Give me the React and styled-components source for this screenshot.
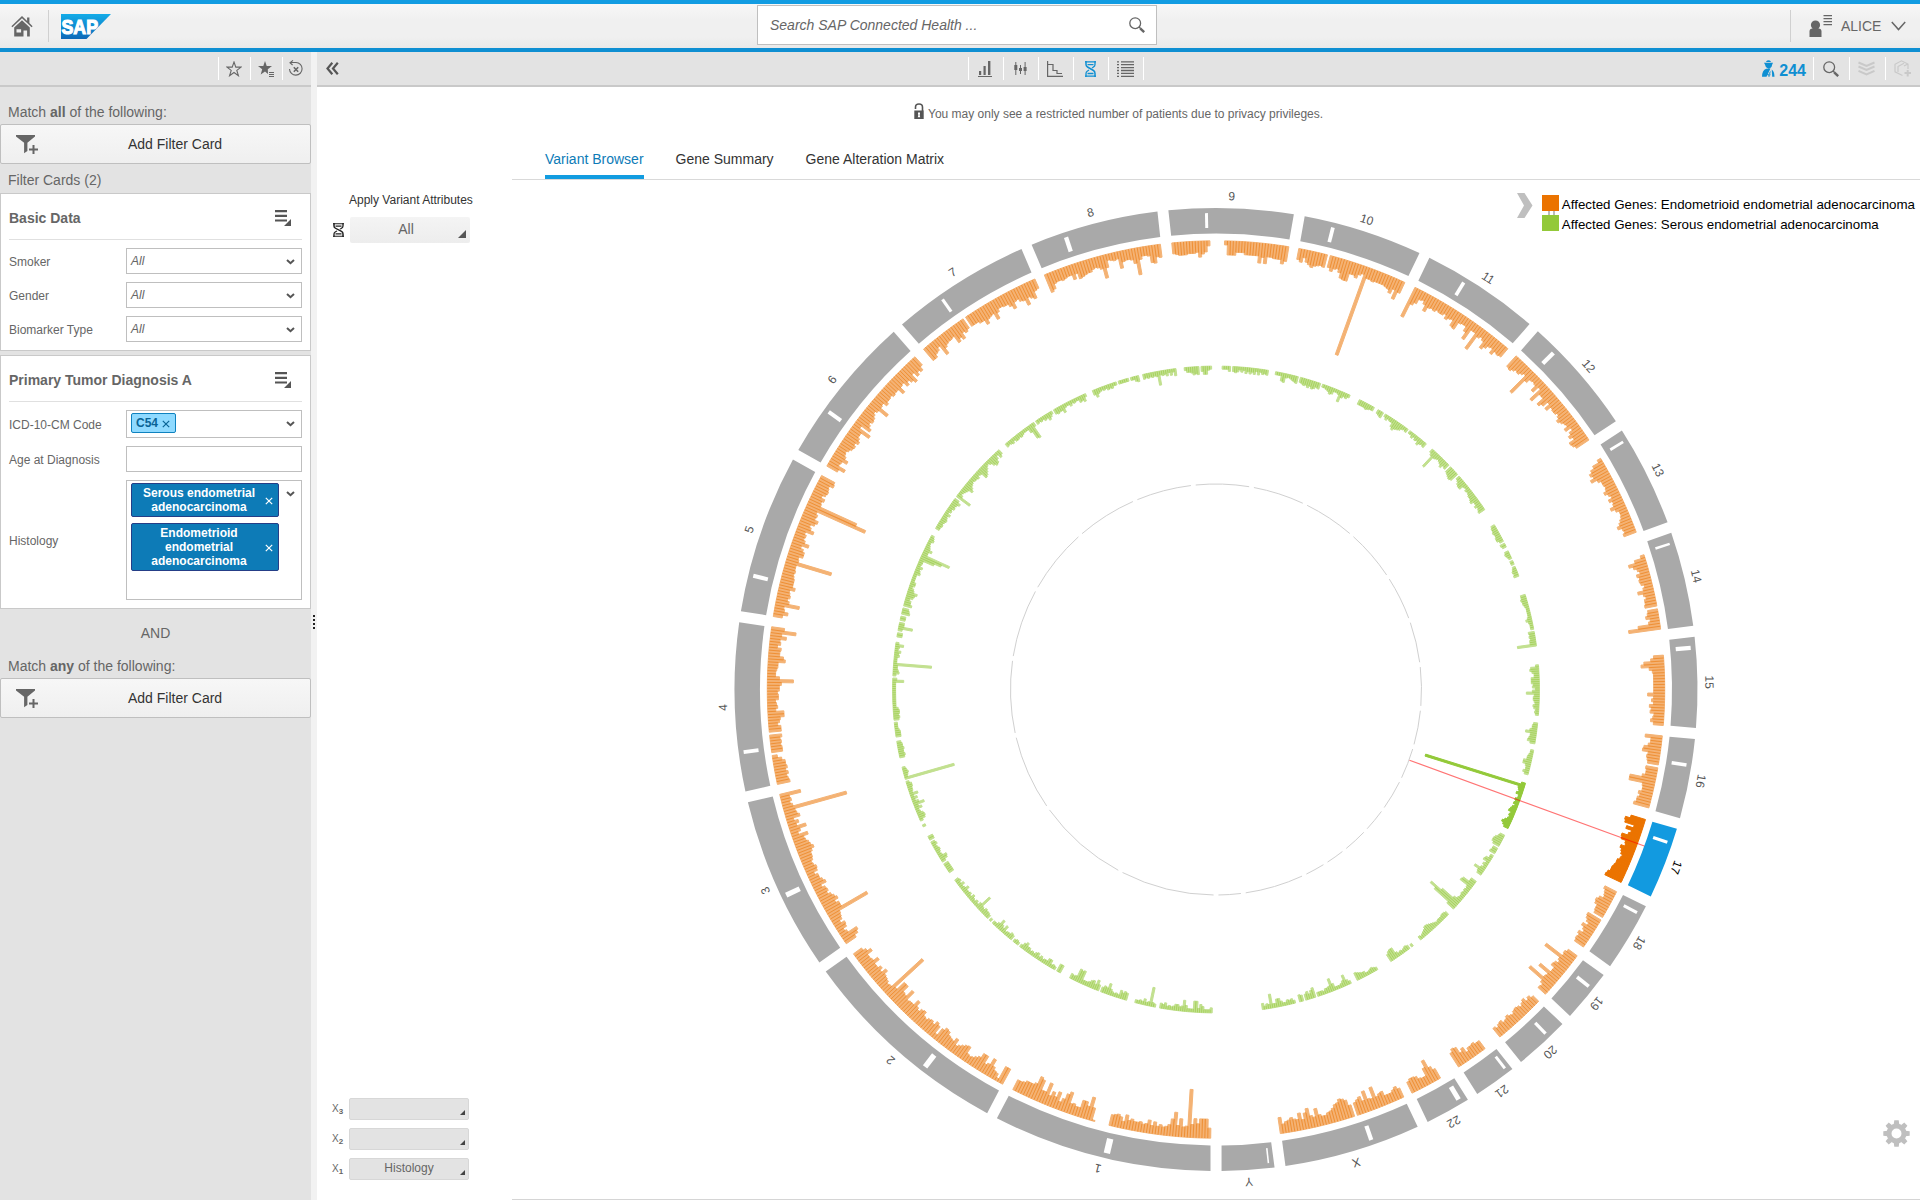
import React from "react";
import styled, { createGlobalStyle, css } from "styled-components";

const Global = createGlobalStyle`
  * { box-sizing: border-box; }
  html, body { margin: 0; padding: 0; }
  body { font-family: "Liberation Sans", Arial, sans-serif; font-size: 14px; color: #666; background: #fff; overflow: hidden; }
  svg { display: block; }
`;

const Page = styled.div`
  display: flex;
  flex-direction: column;
  width: 1920px;
  height: 1200px;
  overflow: hidden;
`;

const Header = styled.header`
  flex: none;
  height: 52px;
  border-top: 4px solid #129ce2;
  border-bottom: 4px solid #0f8fd2;
  background: linear-gradient(#f7f7f7, #f0f0f0 35%, #f0f0f0 75%, #e9e9e9);
  display: grid;
  grid-template-columns: 757px 400px 1fr;
`;

const HeaderLeft = styled.div`
  display: flex;
  align-items: center;
  padding-left: 11px;
`;

const HeaderDivider = styled.div`
  width: 1px;
  height: 32px;
  background: #d0d0d0;
`;

const Home = styled.div`width: 37px;`;
const Logo = styled.div`margin: 1px 0 0 12px;`;

const SearchBox = styled.div`
  height: 40px;
  margin-top: 1px;
  background: #fff;
  border: 1px solid #bfbfbf;
  display: flex;
  align-items: center;
  justify-content: space-between;
  padding: 0 11px 0 12px;
  font-style: italic;
`;

const UserArea = styled.div`
  display: flex;
  align-items: center;
  justify-content: flex-end;
  padding: 0 14px 1px 0;
`;

const UserName = styled.span`
  width: 48px;
  margin-right: 2px;
`;

const Body = styled.div`
  flex: 1;
  display: flex;
  min-height: 0;
`;

const Sidebar = styled.aside`
  width: 311px;
  flex: none;
  background: #e3e3e3;
`;

const Splitter = styled.div`
  width: 6px;
  flex: none;
  background: #f2f2f2;
  display: flex;
  justify-content: center;
  padding-top: 563px;
`;

const Toolbar = styled.div`
  height: 35px;
  background: #e3e3e3;
  border-bottom: 2px solid #c9c9c9;
  display: flex;
  align-items: center;
  justify-content: ${(p) => p.$justify || "flex-start"};
`;

const Tool = styled.div`
  width: ${(p) => p.$w}px;
  height: 23px;
  border-left: 1px solid #fff;
  display: flex;
  align-items: center;
  justify-content: center;
  padding-right: 2px;
  ${(p) => p.$last && css`border-right: 1px solid #fff;`}
`;

const MatchText = styled.div`
  height: ${(p) => p.$h}px;
  padding: ${(p) => p.$top}px 8px 0;
  line-height: 16px;
`;

const AddButton = styled.button`
  display: grid;
  grid-template-columns: 38px 1fr;
  align-items: center;
  width: 311px;
  height: 40px;
  padding: 0 0 0 15px;
  border: 1px solid #bfbfbf;
  border-radius: 2px;
  background: linear-gradient(#f7f7f7, #efefef);
  font: 14px "Liberation Sans", Arial, sans-serif;
  color: #333;
  text-align: left;
`;

const AddLabel = styled.span`padding: 0 0 1px 74px;`;

const Card = styled.section`
  border: 1px solid #c9c9c9;
  background: #fff;
  padding: 0 8px;
  height: ${(p) => p.$h}px;
  margin-bottom: 4px;
`;

const CardHead = styled.div`
  height: 46px;
  border-bottom: 1px solid #e0e0e0;
  display: flex;
  align-items: center;
  justify-content: space-between;
  padding: 2px 11px 0 0;
  font-weight: bold;
`;

const Fields = styled.div`
  padding-top: 8px;
  display: flex;
  flex-direction: column;
  gap: 8px;
`;

const Field = styled.div`
  display: grid;
  grid-template-columns: 117px 176px;
  align-items: center;
  font-size: 12px;
`;

const FieldLabel = styled.label`padding-top: ${(p) => p.$drop ?? 2}px;`;

const Input = styled.div`
  height: ${(p) => p.$h || 26}px;
  border: 1px solid #bfbfbf;
  background: #fff;
  display: flex;
  justify-content: space-between;
  padding: 0 6px 0 4px;
`;

const Placeholder = styled.span`
  font-style: italic;
  line-height: 24px;
`;

const Arrow = styled.span`padding-top: 10px;`;

const Tags = styled.div`
  display: flex;
  flex-direction: column;
  gap: 6px;
  padding-top: 2px;
`;

const Tag = styled.div`
  display: flex;
  align-items: center;
  justify-content: space-between;
  font-weight: bold;
  border-radius: 2px;
  ${(p) =>
    p.$light
      ? css`
          width: 45px; height: 20px; padding: 0 5px 0 4px;
          color: #0a6496; background: #8fdaff; border: 1px solid #0f82bf;
        `
      : css`
          width: 148px; height: ${p.$h}px; padding: 0 5px 0 10px;
          color: #fff; background: #0d7bb7; border: 1px solid #253e87;
          line-height: 14px; text-align: center;
        `}
`;

const TagText = styled.span`
  width: ${(p) => (p.$w ? `${p.$w}px` : "auto")};
`;

const And = styled.div`
  height: 35px;
  padding-top: 12px;
  line-height: 16px;
  text-align: center;
`;

const Main = styled.main`
  flex: 1;
  display: flex;
  flex-direction: column;
  min-width: 0;
`;

const MainBar = styled(Toolbar)`
  display: grid;
  grid-template-columns: 651px 176px 1fr;
`;

const Collapse = styled.div`padding-left: 9px;`;
const Group = styled.div`
  display: flex;
  align-items: center;
  justify-content: ${(p) => (p.$end ? "flex-end" : "flex-start")};
`;

const Count = styled.div`
  display: flex;
  align-items: center;
  gap: 4px;
  margin-right: 7px;
  color: #0f8fd2;
  font-weight: bold;
  font-size: 16px;
`;

const CountText = styled.span`padding-top: 5px;`;

const Notice = styled.div`
  height: 49px;
  padding: 16px 0 0 402px;
  display: flex;
  gap: 4px;
  font-size: 12px;
`;

const NoticeText = styled.span`padding-top: 4px;`;

const Content = styled.div`
  flex: 1;
  display: grid;
  grid-template-columns: 195px 1fr;
  min-height: 0;
`;

const Attributes = styled.div`
  display: flex;
  flex-direction: column;
  justify-content: space-between;
  padding: 106px 0 20px 15px;
`;

const AttrTitle = styled.div`
  padding-left: 17px;
  font-size: 12px;
  color: #333;
  height: 24px;
`;

const AttrRow = styled.div`
  display: flex;
  align-items: center;
  padding-left: 1px;
  gap: 6px;
`;

const AttrButton = styled.div`
  width: 120px;
  height: 26px;
  border-radius: 2px;
  background: linear-gradient(#f4f4f4, #ededed);
  display: flex;
  align-items: flex-end;
  padding: 0 4px 5px 0;
  text-align: center;
`;

const AttrValue = styled.span`
  flex: 1;
  padding-left: 4px;
  line-height: 17px;
`;

const Axes = styled.div`
  display: flex;
  flex-direction: column;
  gap: 8px;
`;

const AxisRow = styled.div`display: flex; align-items: center;`;

const AxisLabel = styled.span`
  width: 17px;
  font-size: 10px;
  white-space: nowrap;
  sub { font-size: 8px; vertical-align: -2px; font-weight: bold; }
`;

const AxisButton = styled.div`
  width: 120px;
  height: 22px;
  border: 1px solid #d7d7d7;
  border-radius: 2px;
  background: #e3e3e3;
  display: flex;
  align-items: flex-end;
  padding: 0 3px 4px 8px;
  font-size: 12px;
`;

const AxisValue = styled.span`
  flex: 1;
  text-align: center;
  line-height: 13px;
`;

const Corner = styled.i`
  border-style: solid;
  border-color: transparent transparent ${(p) => p.$color || "#444"} transparent;
  border-width: 0 0 ${(p) => p.$size}px ${(p) => p.$size}px;
`;

const Browser = styled.div`
  position: relative;
  display: flex;
  flex-direction: column;
  border-bottom: 1px solid #d5d5d5;
`;

const Tabs = styled.nav`
  height: 44px;
  border-bottom: 1px solid #d9d9d9;
  display: flex;
  gap: 32px;
  padding-left: 33px;
`;

const Tab = styled.div`
  height: 43px;
  padding-top: 15px;
  line-height: 16px;
  color: ${(p) => (p.$active ? "#0d7bb7" : "#333")};
  ${(p) => p.$active && css`border-bottom: 4px solid #129ce0;`}
`;

const Chart = styled.svg`
  width: 1408px;
  height: 1019px;
  font-family: "Liberation Sans", Arial, sans-serif;
`;

const Legend = styled.div`
  position: absolute;
  right: 5px;
  top: 106px;
  display: flex;
  gap: 9px;
  color: #000;
  font-size: 13.33px;
`;

const LegendItems = styled.div`
  display: grid;
  gap: 4px;
  padding-top: 2px;
  align-content: start;
  background: linear-gradient(#bbb, #bbb) 6px 18px / 2px 4px no-repeat, linear-gradient(#bbb, #bbb) 11px 18px / 2px 4px no-repeat;
`;

const LegendItem = styled.div`
  display: flex;
  gap: 3px;
  height: 16px;
  line-height: 19px;
  white-space: nowrap;
  &::before { content: ""; width: 17px; height: 16px; background: ${(p) => p.$color}; }
`;

const Settings = styled.div`
  position: absolute;
  left: 1371px;
  top: 1033px;
`;

const Chevron = () => (
  <svg width="9" height="6" viewBox="0 0 9 6"><path d="M1 1l3.5 3.2L8 1" fill="none" stroke="#555" strokeWidth="2" /></svg>
);
const CrossPlace = styled.span`padding-top: 2px;`;
const Cross = ({ color }) => (
  <CrossPlace>
    <svg width="8" height="8" viewBox="0 0 8 8"><path d="M.8.8l6.4 6.4M7.2.8L.8 7.2" stroke={color} strokeWidth="1.2" /></svg>
  </CrossPlace>
);
const FilterIcon = () => (
  <svg width="23" height="20" viewBox="0 0 23 20" fill="#666">
    <path d="M0 1h19v1.6l-7.6 6.2V17l-3.3 2.2V8.8L0 2.6z" />
    <path d="M13 14.6h3.5V11h2v3.6H22v2h-3.5V20h-2v-3.4H13z" />
  </svg>
);
const MenuIcon = () => (
  <svg width="16" height="16" viewBox="0 0 16 16" fill="#555"><path d="M0 0h12v2.2H0zM0 4.7h12v2.2H0zM0 9.4h12v2.2H0zM16 9v7H9z" /></svg>
);
const SearchIcon = () => (
  <svg width="16" height="16" viewBox="0 0 16 16" fill="none" stroke="#666">
    <circle cx="6.2" cy="6.2" r="5.4" strokeWidth="1.3" /><path d="M10 10l1.6 1.6" strokeWidth="1.4" /><path d="M11.2 11.4l4 3.8" strokeWidth="2.4" />
  </svg>
);
const DnaIcon = ({ color, h = 16 }) => (
  <svg width="11" height={h} viewBox="0 0 11 16" fill="none" stroke={color} preserveAspectRatio="none">
    <path d="M1 0v3.500Q1 5.200 2.500 6L8.500 9.500Q10 10.400 10 12.500V16" strokeWidth="1.500" />
    <path d="M10 0v3.500Q10 5.400 8.200 6.200L7 7M4 9L2.500 10Q1 10.900 1 12.500V16" strokeWidth="1.300" />
    <path d="M0 .8h11M2.500 3.600h6M2.500 12.500h6M0 15.200h11" strokeWidth="1.300" />
  </svg>
);

const CX = 1216;
const CY = 689.5;
const SCALE = 0.1058;
const PAD = 1.353;
const BIN = 0.375;
const ORANGE = "#eb7300";
const GREEN = "#93c939";

// name, length (Mb), centromere start, centromere end, outer bins, inner bins, value of "*"
const CHROMOSOMES = [
  ["1", 249.25, 121.5, 128.9, "ajjjejdMbaibohb98a8c8d98a99b9e7bdcb000001dndhh99balic8hbfamccmogeeecbb", "5333684bb3336b546643436450034j43634330000786834346b67506a5875444dcd545"],
  ["2", 243.2, 90.5, 96.8, "hh378bib9hhca878feca8eabcfgd5dfbdcabfebdiccbldellbO98abcgbebbhcbbhda", "0880343774435365343558630343056443846a533030455645g63534635447436354"],
  ["3", 198.02, 87.9, 93.9, "cgi86ab7abcJggdhfdacb8ecaa7bca9bccehfecbg7ah8b7ecb*a8a9l", "555550478434543540550000030036764374b636383445530P34543", 65],
  ["4", 191.15, 48.2, 52.7, "dcbdbdcc950bbabac0cc9bcgg8a98bbacceqc889aahfbbc8bagbpd", "565565540055543330565665333333333333b4036544C3335463483"],
  ["5", 180.92, 46.1, 50.7, "9ea9odbdcbgdddcbcbbLcbffdahcab9hdbfhdec*Rdceadedcgf", "5504e5505508760866478a6535533336546344fmu5585433543", 64],
  ["6", 171.12, 58.7, 63.3, "ciabgca9bdecfdbbk7hecedb9blbaeccbdccicbgdgjbgdfb", "445456546354656850g53456a865455645ba864358a96375"],
  ["7", 159.14, 58.0, 61.7, "ffcb8jdbaa9hehbdb0bbbddiedcjdaabbeicbeflegiba", "43453554543337fg40434354753056558433534336573"],
  ["8", 146.36, 43.1, 48.1, "jhcbbcbaafagfeddbabdnd6787hbaabfrc99ahicd", "58543435453303333303356005454545e45463637"],
  ["9", 141.21, 47.3, 50.7, "bcdddcccbgdb5000004eeebbbdddddkekddeeeif", "3556878058843000003335056535364646363545"],
  ["10", 135.53, 38.0, 42.3, "bd8cegedcd0cfcbejkkccea8*bbcbbbbcdgbkc", "33389434567056768687560334576334b6453", 93],
  ["11", 135.01, 51.6, 55.7, "whe98bhcbcabb9dbagh988dk88qa8ahebafbcb", "55556544004560353448a87643403353547545"],
  ["12", 133.85, 33.3, 38.2, "efdbca8uc878e7lbbjgagbccacfdbae8cfcihf", "46j654568560789a9045788435456678557567"],
  ["13", 115.17, 16.3, 19.5, "00004bfigkebbabeb9dabfb889bdgcbd", "00000455655664054004543033034545"],
  ["14", 107.35, 16.1, 19.1, "00004bieb9dbcb8agb9bbc0abd9bmw", "00000556554333334643330656566j"],
  ["15", 102.53, 15.8, 20.7, "00000adknfcbbbbbbbhbdbfdeabda", "000003897558886747d5665465343"],
  ["16", 90.35, 34.6, 38.6, "hbbdhicdcb0cbbeqqcbbeceeg", "4557b66785000334558854464"],
  ["17", 81.2, 22.2, 25.8, "fkj9gacihcbfdcabddeffhi", "4*654633545356745457975", 104],
  ["18", 78.08, 15.4, 19.0, "dba9dfebba0fec9eb9dbcb", "5689970556033673535b65"],
  ["19", 59.13, 24.4, 28.6, "bdcwdbefbbocduc9a", "66de545454458mzs9"],
  ["20", 63.03, 25.6, 29.4, "8b9db9bcb9aca9cb9b", "455444345678865434"],
  ["21", 48.13, 10.9, 14.3, "000aacbb8ebijg", "0304543435bba8"],
  ["22", 51.3, 12.2, 17.9, "0000bfoh99adeec", "000034543355678"],
  ["X", 155.27, 58.1, 63.0, "adb999edbmbclchfd0ciklihecb99biackgahbcecb9g", "35b643337d65534440a85860670035453358844e4536"],
  ["Y", 59.37, 11.6, 13.4, "", ""],
];

const pt = (r, deg) => {
  const a = (deg * Math.PI) / 180;
  return [CX + r * Math.sin(a), CY - r * Math.cos(a)];
};
const xy = (r, deg) => pt(r, deg).map((v) => v.toFixed(2)).join(" ");
const toDeg = (rad) => (rad * 180) / Math.PI;

const heightOf = (ch, tall) => {
  if (ch === "*") return tall;
  const c = ch.charCodeAt(0);
  if (c < 58) return c - 48;
  return c < 91 ? c - 29 : c - 87;
};

function Segment({ from, to, fill }) {
  const r0 = 456, r1 = 481.5;
  const o0 = toDeg(Math.asin(5.5 / r0)), o1 = toDeg(Math.asin(5.5 / r1));
  return (
    <path fill={fill} d={`M${xy(r0, from + o0)}L${xy(r1, from + o1)}A${r1} ${r1} 0 0 1 ${xy(r1, to - o1)}L${xy(r0, to - o0)}A${r0} ${r0} 0 0 0 ${xy(r0, from + o0)}Z`} />
  );
}

function Bars({ start, data, tall, base, color, opacity }) {
  return (
    <g fill={color} stroke={color} strokeWidth="1">
      {[...data].map((ch, i) => {
        const h = heightOf(ch, tall);
        if (!h) return null;
        const a = start + i * BIN;
        const b = a + BIN;
        const mid = (a + b) / 2;
        const half = (base * BIN * Math.PI) / 360;
        const tip = toDeg(Math.atan(half / (base - h)));
        return <path key={i} opacity={opacity} d={`M${xy(base, a)}L${xy(base, b)}L${xy(base - h, mid + tip)}L${xy(base - h, mid - tip)}Z`} />;
      })}
    </g>
  );
}

function Genome() {
  let start = 180;
  return (
    <Chart viewBox="512 180 1408 1019">
      {CHROMOSOMES.map(([name, len, c0, c1, outer, inner, tall]) => {
        const from = start;
        const to = from + len * SCALE + PAD;
        start = to;
        const active = name === "17";
        const mid = (from + to) / 2;
        const [lx, ly] = pt(489.3, mid);
        const cen = from + ((c0 + c1) / 2) * SCALE;
        const cw = (c1 - c0) * SCALE * 8.2;
        const first = from + PAD / 2;
        return (
          <g key={name}>
            <Segment from={from} to={to} fill={active ? "#129ae0" : "#a9a9a9"} />
            <rect x={CX - cw / 2} y={CY - 476.5} width={cw} height="15" fill="#fff" transform={`rotate(${cen} ${CX} ${CY})`} />
            <text x={lx} y={ly} transform={`rotate(${mid} ${lx} ${ly})`} textAnchor="middle" fontSize="12" fill={active ? "#000" : "#555"}>{name}</text>
            <Bars start={first} data={outer} tall={tall} base={448.7} color={ORANGE} opacity={active ? 1 : 0.54} />
            <Bars start={first} data={inner} tall={tall} base={323.4} color={GREEN} opacity={active ? 1 : 0.56} />
            <path d={`M${xy(205.5, from + PAD / 2)}A205.5 205.5 0 0 1 ${xy(205.5, to - PAD / 2)}`} fill="none" stroke="#d0d0d0" strokeWidth="1" />
          </g>
        );
      })}
      <path d={`M${xy(206, 110.08)}L${xy(456, 110.08)}`} stroke="#ff0000" strokeOpacity="0.55" strokeWidth="1.2" />
    </Chart>
  );
}

function TopBar() {
  return (
    <Header>
      <HeaderLeft>
        <Home>
          <svg width="22" height="21" viewBox="0 0 22 21" fill="#666">
            <path d="M11 0L.4 10.2l1 1L11 2.2l9.6 9 1-1-3.2-3.1V1.5h-2.3v3.4z" />
            <path fillRule="evenodd" d="M11 4.2L3.2 11.6V20.5h9.3v-6h3.6v6h2.7v-8.9zM5.5 13.3h4.6v3.2H5.5z" />
          </svg>
        </Home>
        <HeaderDivider />
        <Logo>
          <svg width="50" height="25" viewBox="0 0 50 25">
            <defs><linearGradient id="sap" x1="0" y1="0" x2="0" y2="1"><stop offset="0" stopColor="#13ace8" /><stop offset="1" stopColor="#0d69b8" /></linearGradient></defs>
            <path d="M0 0h50L25.5 25H0z" fill="url(#sap)" />
            <text x="0.5" y="19.6" fontFamily="Liberation Sans, Arial, sans-serif" fontWeight="bold" fontSize="20.5" fill="#fff" stroke="#fff" strokeWidth="1.2" textLength="36.5" lengthAdjust="spacingAndGlyphs">SAP</text>
          </svg>
        </Logo>
      </HeaderLeft>
      <SearchBox>Search SAP Connected Health ...<SearchIcon /></SearchBox>
      <UserArea>
        <HeaderDivider />
        <svg width="50" height="24" viewBox="0 0 50 24" fill="#666">
          <circle cx="24.5" cy="11" r="4.6" /><path d="M18.5 23v-5.5q0-3 3-3h6q3 0 3 3V23z" />
          <path d="M32.5 1h8.5v1.3h-8.5zM32.5 4h8.5v1.3h-8.5zM32.5 7h8.5v1.3h-8.5zM32.5 10h8.5v1.3h-8.5z" />
        </svg>
        <UserName>ALICE</UserName>
        <svg width="15" height="10" viewBox="0 0 15 10"><path d="M.8 1l6.7 7.5L14.2 1" fill="none" stroke="#666" strokeWidth="1.5" /></svg>
      </UserArea>
    </Header>
  );
}

const Select = ({ label }) => (
  <Field>
    <FieldLabel>{label}</FieldLabel>
    <Input><Placeholder>All</Placeholder><Arrow><Chevron /></Arrow></Input>
  </Field>
);

const AddFilter = () => (
  <AddButton><FilterIcon /><AddLabel>Add Filter Card</AddLabel></AddButton>
);

function Filters() {
  return (
    <Sidebar>
      <Toolbar $justify="flex-end">
        <Tool $w={32}>
          <svg width="16" height="16" viewBox="0 0 16 16"><path d="M8 1l1.8 5.100h5.300L10.800 9.400l1.600 5.300L8 11.500l-4.400 3.200 1.600-5.300L.9 6.100h5.300z" fill="none" stroke="#666" strokeWidth="1.1" /></svg>
        </Tool>
        <Tool $w={32}>
          <svg width="16" height="16" viewBox="0 0 16 16" fill="#666"><path d="M7 0l1.700 5.100h5.300L9.800 8.300 10 13 7 10.500 2.700 13.500 4.200 8.300 0 5.100h5.300zM11 11h5v1h-5zM11 13h5v1h-5zM11 15h5v1h-5z" /></svg>
        </Tool>
        <Tool $w={29}>
          <svg width="16" height="17" viewBox="0 0 16 17" fill="none" stroke="#666"><path d="M2.500 2.500H8A6.300 6.300 0 1 1 1.500 9M5 .4L2 2.700 4.600 5" strokeWidth="1.1" /><path d="M5.800 7.300l4.400 4.400M10.200 7.300l-4.400 4.400" strokeWidth="1.6" /></svg>
        </Tool>
      </Toolbar>
      <MatchText $h={37} $top={17}>Match <b>all</b> of the following:</MatchText>
      <AddFilter />
      <MatchText $h={29} $top={8}>Filter Cards (2)</MatchText>
      <Card $h={158}>
        <CardHead>Basic Data<MenuIcon /></CardHead>
        <Fields>
          <Select label="Smoker" />
          <Select label="Gender" />
          <Select label="Biomarker Type" />
        </Fields>
      </Card>
      <Card $h={254}>
        <CardHead>Primary Tumor Diagnosis A<MenuIcon /></CardHead>
        <Fields>
          <Field>
            <FieldLabel $drop={1}>ICD-10-CM Code</FieldLabel>
            <Input $h={28}>
              <Tags><Tag $light><TagText>C54</TagText><Cross color="#0a6496" /></Tag></Tags>
              <Arrow><Chevron /></Arrow>
            </Input>
          </Field>
          <Field><FieldLabel>Age at Diagnosis</FieldLabel><Input /></Field>
          <Field>
            <FieldLabel>Histology</FieldLabel>
            <Input $h={120}>
              <Tags>
                <Tag $h={34}><TagText $w={114}>Serous endometrial adenocarcinoma</TagText><Cross color="#fff" /></Tag>
                <Tag $h={48}><TagText $w={114}>Endometrioid endometrial adenocarcinoma</TagText><Cross color="#fff" /></Tag>
              </Tags>
              <Arrow><Chevron /></Arrow>
            </Input>
          </Field>
        </Fields>
      </Card>
      <And>AND</And>
      <MatchText $h={30} $top={10}>Match <b>any</b> of the following:</MatchText>
      <AddFilter />
    </Sidebar>
  );
}

const disabled = "#c9c9c9";

function MainToolbar() {
  return (
    <MainBar>
      <Collapse>
        <svg width="13" height="13" viewBox="0 0 13 13"><path d="M6.3.8L1.500 6.500l4.800 5.700M11.800.8L7 6.500l4.800 5.700" fill="none" stroke="#555" strokeWidth="2.2" /></svg>
      </Collapse>
      <Group>
        <Tool $w={35}><svg width="14" height="16" viewBox="0 0 14 16" fill="#666"><path d="M1 10h2.200v4H1zM5.500 5h2.200v9H5.500zM10 0h2.400v14H10zM0 15h14v1H0z" /></svg></Tool>
        <Tool $w={35}><svg width="13" height="15" viewBox="0 0 13 15" fill="#666"><path d="M1.300 1h1v13h-1zM.3 4h3v5h-3zM6 4h1v9H6zM5 7h3v3H5zM10.600 1h1v13h-1zM9.600 6h3v4h-3z" /></svg></Tool>
        <Tool $w={35}><svg width="16" height="16" viewBox="0 0 16 16" fill="none" stroke="#666" strokeWidth="1.2"><path d="M.6 0v15.400H16M1 3.500h5v6h4v3h5" /></svg></Tool>
        <Tool $w={35}><DnaIcon color="#0f8fd2" /></Tool>
        <Tool $w={36} $last><svg width="17" height="16" viewBox="0 0 17 16"><path d="M4 .8h13M4 3.700h13M4 6.600h13M4 9.500h13M4 12.400h13M4 15.300h13M0 .8h2M0 3.700h2M0 6.600h2M0 9.500h2M0 12.400h2M0 15.300h2" stroke="#666" strokeWidth="1.3" /></svg></Tool>
      </Group>
      <Group $end>
        <Count>
          <svg width="13" height="17" viewBox="0 0 13 17" fill="#0f8fd2"><path d="M4 1.500Q6.500-.8 9 1.500L8.500 2h-4zM2 2.800h9L10 5q0 3-3.200 3.400Q3.400 8 3.200 5zM8.500 8.500L4.500 16.800H0q0-6.500 4.200-8zM9.700 9.500q2.800 2 2.800 7.300h-2.300zM8.600 10.500l-.3 3.300h-1.600zM5.500 14.300h3v1H7.600v1.500H6.400v-1.500h-.9z" /></svg>
          <CountText>244</CountText>
        </Count>
        <Tool $w={36}><SearchIcon /></Tool>
        <Tool $w={36}><svg width="17" height="15" viewBox="0 0 17 15" fill="none" stroke={disabled} strokeWidth="2"><path d="M.5 1.500l8 3.500 8-3.500M.5 5.500l8 3.500 8-3.500M.5 9.800l8 3.500 8-3.500" /></svg></Tool>
        <Tool $w={35}><svg width="17" height="17" viewBox="0 0 17 17" fill="none" stroke={disabled} strokeWidth="1.2"><path d="M8.500 15.500L1 11.800V4.300L7.500.8 14 4v5M4 12V6.500L10 3.200M10 6l3.800-2" /><path d="M10.500 13H17M13.700 10v6.500" strokeWidth="2" /></svg></Tool>
      </Group>
    </MainBar>
  );
}

const Axis = ({ n, value }) => (
  <AxisRow>
    <AxisLabel>X<sub>{n}</sub></AxisLabel>
    <AxisButton><AxisValue>{value}</AxisValue><Corner $size={5} /></AxisButton>
  </AxisRow>
);

function VariantBrowser() {
  return (
    <Browser>
      <Notice>
        <svg width="10" height="17" viewBox="0 0 10 17"><path d="M1.500 6V4.200Q1.500 1 5 1t3.500 3.200V8" fill="none" stroke="#555" strokeWidth="1.6" /><path fillRule="evenodd" fill="#555" d="M.3 7.500h9.400V16H.3zM4 9.500v1.800l.4.5-.6 2.400h2.400l-.6-2.400.4-.5V9.500z" /></svg>
        <NoticeText>You may only see a restricted number of patients due to privacy privileges.</NoticeText>
      </Notice>
      <Tabs>
        <Tab $active>Variant Browser</Tab>
        <Tab>Gene Summary</Tab>
        <Tab>Gene Alteration Matrix</Tab>
      </Tabs>
      <Genome />
      <Legend>
        <svg width="16" height="26" viewBox="0 0 16 26"><path d="M0 0h7.500L15.500 12.500 7.500 25H0L7 12.500z" fill="#bfbfbf" /></svg>
        <LegendItems>
          <LegendItem $color={ORANGE}>Affected Genes: Endometrioid endometrial adenocarcinoma</LegendItem>
          <LegendItem $color={GREEN}>Affected Genes: Serous endometrial adenocarcinoma</LegendItem>
        </LegendItems>
      </Legend>
      <Settings>
        <svg width="27" height="27" viewBox="-13.5 -13.5 27 27" fill="none" stroke="#bfbfbf">
          <circle r="7.5" strokeWidth="5" />
          {[0, 45, 90, 135, 180, 225, 270, 315].map((a) => <path key={a} d="M-2.800 -9L-2.200 -13.200H2.200L2.800 -9z" fill="#bfbfbf" stroke="none" transform={`rotate(${a})`} />)}
        </svg>
      </Settings>
    </Browser>
  );
}

export default function App() {
  return (
    <Page>
      <Global />
      <TopBar />
      <Body>
        <Filters />
        <Splitter>
          <svg width="2" height="14" viewBox="0 0 2 14" fill="#222"><path d="M0 0h2v2H0zM0 4h2v2H0zM0 8h2v2H0zM0 12h2v2H0z" /></svg>
        </Splitter>
        <Main>
          <MainToolbar />
          <Content>
            <Attributes>
              <div>
                <AttrTitle>Apply Variant Attributes</AttrTitle>
                <AttrRow>
                  <DnaIcon color="#222" h={14} />
                  <AttrButton><AttrValue>All</AttrValue><Corner $size={8} $color="#555" /></AttrButton>
                </AttrRow>
              </div>
              <Axes><Axis n="3" /><Axis n="2" /><Axis n="1" value="Histology" /></Axes>
            </Attributes>
            <VariantBrowser />
          </Content>
        </Main>
      </Body>
    </Page>
  );
}
